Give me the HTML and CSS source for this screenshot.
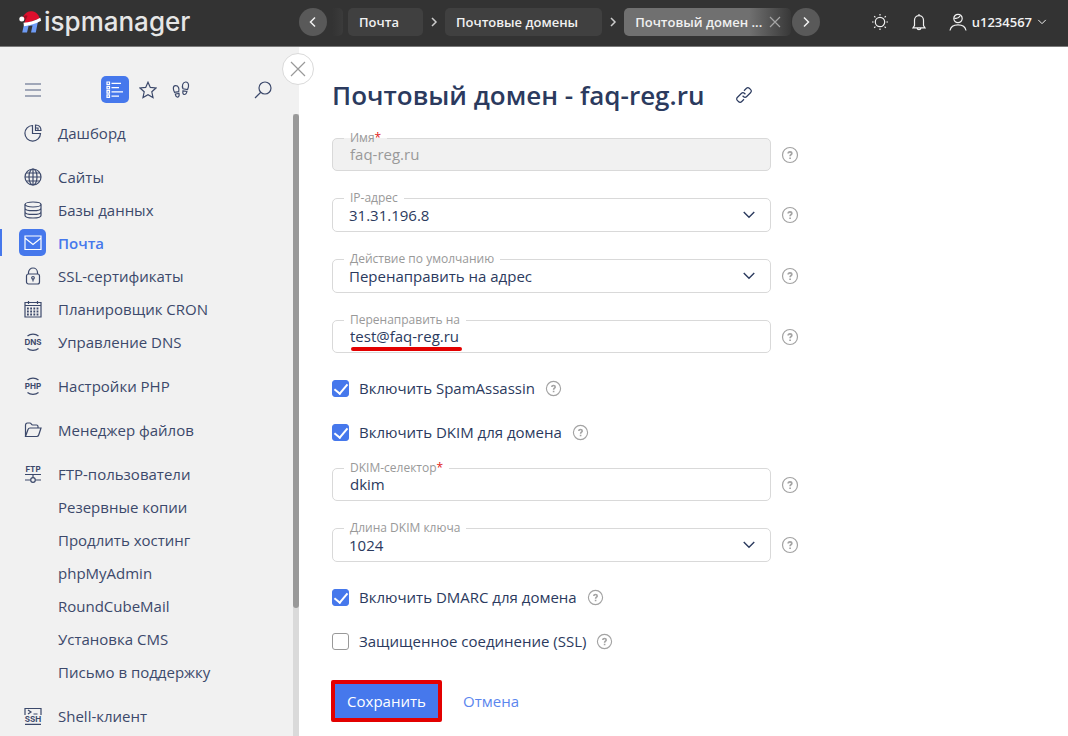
FILE: index.html
```html
<!DOCTYPE html>
<html lang="ru">
<head>
<meta charset="utf-8">
<title>Почтовый домен - faq-reg.ru</title>
<link rel="stylesheet" href="styles.css">
</head>
<body>
<svg class="defs" aria-hidden="true">
  <symbol id="chev-down" viewBox="0 0 12 12"><path d="M1.500 3.500 6 8l4.500-4.500"/></symbol>
  <symbol id="help" viewBox="0 0 18 18"><circle cx="9" cy="9" r="7.500"/><path class="q" d="M7.200 7.500c0-1.200.8-1.700 1.800-1.700s1.800.6 1.800 1.600c0 1.300-1.700 1.300-1.700 2.800M9.100 11.500v1.500"/></symbol>
</svg>

<header class="topbar">
  <a class="logo" href="#">
    <svg width="23" height="24" viewBox="0 0 23 24">
      <path fill="#6e9bf5" d="M5.200 13.500h5L8 22.500H3.200z"/>
      <path fill="#6e9bf5" d="M9.500 13l9.700-3-2.400 12.500H12l1.500-7-3.500.5z"/>
      <path fill="#de0f2d" d="M4 6.500C6.500 2.500 9.500.8 13 1.200c4 .5 7 3.500 7.800 7.300L5 14 7 8z"/>
      <path fill="#9d0d22" d="M3.800 7.500C5 5.600 6.800 5.200 8.600 5.800L6.800 10z"/>
      <path fill="#fff" d="M4.500 12.800Q13.500 12 21.300 7.700L22.200 10.800Q14 15.300 5 16.200z"/>
      <circle cx="2.800" cy="9" r="2.500" fill="#fff"/>
    </svg>
    <span>ispmanager</span>
  </a>
  <nav class="crumbs" aria-label="Навигация">
    <button class="round" aria-label="Назад"><svg width="12" height="12" viewBox="0 0 12 12"><path d="M8 1.500 3.500 6 8 10.500"/></svg></button>
    <span class="crumb-stub"></span>
    <a class="crumb" href="#">Почта</a>
    <svg class="sep" width="8" height="12" viewBox="0 0 8 12"><path d="M2 2l4 4-4 4"/></svg>
    <a class="crumb" href="#">Почтовые домены</a>
    <svg class="sep" width="8" height="12" viewBox="0 0 8 12"><path d="M2 2l4 4-4 4"/></svg>
    <a class="crumb current" href="#">Почтовый домен ... <svg width="12" height="12" viewBox="0 0 12 12"><path d="M1 1l10 10M11 1 1 11"/></svg></a>
    <button class="round" aria-label="Вперёд"><svg width="12" height="12" viewBox="0 0 12 12"><path d="M4 1.500l4.500 4.500L4 10.500"/></svg></button>
  </nav>
  <div class="tools">
    <button class="tool" aria-label="Тема"><svg width="18" height="18" viewBox="0 0 18 18"><circle cx="9" cy="9" r="4.700"/><path d="M9 1v1.600M9 15.400V17M1 9h1.600M15.400 9H17M3.200 3.200l1.200 1.200M13.600 13.600l1.200 1.200M3.200 14.800l1.200-1.200M13.600 4.400l1.200-1.200"/></svg></button>
    <button class="tool" aria-label="Уведомления"><svg width="18" height="18" viewBox="0 0 18 18"><path d="M9 1v1.500M4.500 12.500V7.200a4.500 4.500 0 0 1 9 0v5.300l1.500 2.300H3zM7 15c.3 2.200 3.700 2.200 4 0"/></svg></button>
    <button class="user"><svg width="18" height="18" viewBox="0 0 18 18"><circle cx="9" cy="5.500" r="4.200"/><path d="M5.300 5.200c2.700.6 4.700-.2 5.700-2.200M1 17.500c.6-3.700 3.500-5.700 8-5.700s7.400 2 8 5.700"/></svg><span>u1234567</span><svg width="10" height="10" viewBox="0 0 12 12"><use href="#chev-down"/></svg></button>
  </div>
</header>

<div class="layout">
  <aside class="sidebar">
    <div class="side-tools">
      <button class="icon-btn menu" aria-label="Меню"><svg width="18" height="18" viewBox="0 0 18 18"><path d="M1 3h16M1 9h16M1 15h16"/></svg></button>
      <button class="icon-btn active" aria-label="Список"><svg width="18" height="18" viewBox="0 0 18 18"><path d="M1 1h2.500v2.500H1zM1 5.300h2.500v2.500H1zM1 9.600h2.500v2.500H1zM1 13.900h2.500v2.500H1zM5.500 2.300H15M5.500 6.600H13M5.500 10.900H17M5.500 15.200H13"/></svg></button>
      <button class="icon-btn star" aria-label="Избранное"><svg width="18" height="18" viewBox="0 0 18 18"><path d="M9 1.200l2.300 5.200 5.700.6-4.200 3.800 1.200 5.700L9 13.700l-5 2.800 1.200-5.700L1 7l5.700-.6z"/></svg></button>
      <button class="icon-btn steps" aria-label="История"><svg width="18" height="18" viewBox="0 0 18 18"><path d="M2.500 11.300C1 8.500.6 4.800 3.500 4.700c3-.1 4 3 3.200 6zM3.300 13l3.700-.6c1 4.500-3 5-3.700.6zM11 7.800C9.500 4.500 11 .9 13.800 1c3.400.2 3.300 4.500 1.700 7.600zM11 9.800l3.900.7c-.7 4.500-5.100 3.700-3.900-.7z"/></svg></button>
      <button class="icon-btn search" aria-label="Поиск"><svg width="18" height="18" viewBox="0 0 18 18"><circle cx="11" cy="7" r="6"/><path d="M6.800 11.300 1 17"/></svg></button>
    </div>
    <nav class="menu-list" aria-label="Разделы">
      <a class="item last" href="#"><span class="ico"><svg width="18" height="18" viewBox="0 0 18 18"><path d="M8.500 1.500a7.800 7.800 0 1 0 8 8h-8zM11.500 1v5.500H17c0-3.500-2-5.500-5.500-5.500zM11.500 4h2.500v2.500"/></svg></span>Дашборд</a>
      <a class="item" href="#"><span class="ico"><svg width="18" height="18" viewBox="0 0 18 18"><circle cx="9" cy="9" r="8"/><ellipse cx="9" cy="9" rx="4" ry="8"/><path d="M9 1v16M1 9h16M2.200 5h13.600M2.200 13h13.600"/></svg></span>Сайты</a>
      <a class="item" href="#"><span class="ico"><svg width="18" height="18" viewBox="0 0 18 18"><ellipse cx="9" cy="3.500" rx="8" ry="2.500"/><path d="M1 3.500v11c0 3.300 16 3.300 16 0v-11M1 7.200c0 3.300 16 3.300 16 0M1 10.900c0 3.300 16 3.300 16 0"/></svg></span>Базы данных</a>
      <a class="item active" href="#"><span class="ico"><svg width="18" height="18" viewBox="0 0 18 18"><path d="M1 2h16v13.500H1zM1 4l8 6.500L17 4"/></svg></span>Почта</a>
      <a class="item" href="#"><span class="ico"><svg width="18" height="18" viewBox="0 0 18 18"><path d="M4.500 7V5.500a4.500 4.500 0 0 1 9 0V7"/><rect x="2.500" y="7" width="13" height="10" rx="2"/><circle cx="9" cy="10.800" r="1.300"/><path d="M9 12v2.500"/></svg></span>SSL-сертификаты</a>
      <a class="item" href="#"><span class="ico"><svg width="18" height="18" viewBox="0 0 18 18"><path d="M1 2.500h16V17H1zM1 5.500h16M4.500 1v3M13.500 1v3"/><path stroke-width="1.800" stroke-dasharray="1.800 1.400" d="M3 8.500h12.500M3 11.500h12.500M3 14.500h12.500"/></svg></span>Планировщик CRON</a>
      <a class="item last" href="#"><span class="ico"><svg width="18" height="18" viewBox="0 0 18 18"><path d="M3.500 3c3-2.500 8-2.500 11 0M3.500 15.500c3 2.500 8 2.500 11 0"/><text x="9" y="12" text-anchor="middle">DNS</text></svg></span>Управление DNS</a>
      <a class="item last" href="#"><span class="ico"><svg width="18" height="18" viewBox="0 0 18 18"><path d="M3.500 3c3-2.500 8-2.500 11 0M3.500 15.500c3 2.500 8 2.500 11 0"/><text x="9" y="12" text-anchor="middle">PHP</text></svg></span>Настройки PHP</a>
      <a class="item last" href="#"><span class="ico"><svg width="18" height="18" viewBox="0 0 18 18"><path d="M1.500 15.500V4.200Q1.500 2 3.500 2h2.300q1 0 1.500 1t1.500 1h3.700q1.500 0 1.500 1.500V7M1.500 15.500 4 8.500Q4.500 7 6 7h11l-2.300 7q-.5 1.500-2 1.500z"/></svg></span>Менеджер файлов</a>
      <a class="item" href="#"><span class="ico"><svg width="18" height="18" viewBox="0 0 18 18"><path d="M1 9.500h16M9 9.500v3M1 15h5.500M11.500 15H17"/><circle cx="9" cy="15" r="2.300"/><text x="9" y="6.500" text-anchor="middle">FTP</text></svg></span>FTP-пользователи</a>
      <a class="item" href="#"><span class="ico"></span>Резервные копии</a>
      <a class="item" href="#"><span class="ico"></span>Продлить хостинг</a>
      <a class="item" href="#"><span class="ico"></span>phpMyAdmin</a>
      <a class="item" href="#"><span class="ico"></span>RoundCubeMail</a>
      <a class="item" href="#"><span class="ico"></span>Установка CMS</a>
      <a class="item last" href="#"><span class="ico"></span>Письмо в поддержку</a>
      <a class="item" href="#"><span class="ico"><svg width="18" height="18" viewBox="0 0 18 18"><path d="M1 8V1.500h16V8M1 17.300h16M4 3l3 2-3 2M9.500 7h4"/><text x="9" y="15.200" text-anchor="middle">SSH</text></svg></span>Shell-клиент</a>
    </nav>
    <span class="scrollbar"><span class="thumb"></span></span>
    <button class="close" aria-label="Закрыть"><svg width="16" height="16" viewBox="0 0 16 16"><path d="M1 1l14 14M15 1 1 15"/></svg></button>
  </aside>

  <main class="content">
    <div class="heading">
      <h1>Почтовый домен - faq-reg.ru</h1>
      <button class="link-btn" aria-label="Ссылка"><svg width="18" height="18" viewBox="0 0 18 18"><g transform="rotate(-45 9 9)"><path d="M6 12H2.500A2 2 0 0 1 .5 10V8A2 2 0 0 1 2.500 6H8.500A2 2 0 0 1 10.500 8V9.500"/><path d="M12 6H15.500A2 2 0 0 1 17.500 8V10A2 2 0 0 1 15.500 12H9.500A2 2 0 0 1 7.500 10V8.500"/></g></svg></button>
    </div>
    <form class="form">
      <div class="row">
        <div class="field disabled"><label for="name">Имя<b>*</b></label><input id="name" type="text" value="faq-reg.ru" disabled></div>
        <button type="button" class="help" aria-label="Справка"><svg width="18" height="18"><use href="#help"/></svg></button>
      </div>
      <div class="row">
        <div class="field pick"><label for="ip">IP-адрес</label><select id="ip"><option>31.31.196.8</option></select><svg class="arrow" width="14" height="14"><use href="#chev-down"/></svg></div>
        <button type="button" class="help" aria-label="Справка"><svg width="18" height="18"><use href="#help"/></svg></button>
      </div>
      <div class="row">
        <div class="field pick"><label for="action">Действие по умолчанию</label><select id="action"><option>Перенаправить на адрес</option></select><svg class="arrow" width="14" height="14"><use href="#chev-down"/></svg></div>
        <button type="button" class="help" aria-label="Справка"><svg width="18" height="18"><use href="#help"/></svg></button>
      </div>
      <div class="row">
        <div class="field"><label for="redirect">Перенаправить на</label><input id="redirect" type="text" value="test@faq-reg.ru"><span class="mark"></span></div>
        <button type="button" class="help" aria-label="Справка"><svg width="18" height="18"><use href="#help"/></svg></button>
      </div>
      <div class="check">
        <label><input type="checkbox" checked>Включить SpamAssassin</label>
        <button type="button" class="help" aria-label="Справка"><svg width="17" height="17"><use href="#help"/></svg></button>
      </div>
      <div class="check">
        <label><input type="checkbox" checked>Включить DKIM для домена</label>
        <button type="button" class="help" aria-label="Справка"><svg width="17" height="17"><use href="#help"/></svg></button>
      </div>
      <div class="row">
        <div class="field"><label for="selector">DKIM-селектор<b>*</b></label><input id="selector" type="text" value="dkim"></div>
        <button type="button" class="help" aria-label="Справка"><svg width="18" height="18"><use href="#help"/></svg></button>
      </div>
      <div class="row">
        <div class="field pick"><label for="length">Длина DKIM ключа</label><select id="length"><option>1024</option></select><svg class="arrow" width="14" height="14"><use href="#chev-down"/></svg></div>
        <button type="button" class="help" aria-label="Справка"><svg width="18" height="18"><use href="#help"/></svg></button>
      </div>
      <div class="check">
        <label><input type="checkbox" checked>Включить DMARC для домена</label>
        <button type="button" class="help" aria-label="Справка"><svg width="17" height="17"><use href="#help"/></svg></button>
      </div>
      <div class="check">
        <label><input type="checkbox">Защищенное соединение (SSL)</label>
        <button type="button" class="help" aria-label="Справка"><svg width="17" height="17"><use href="#help"/></svg></button>
      </div>
      <div class="actions">
        <button type="submit" class="save">Сохранить</button>
        <button type="button" class="cancel">Отмена</button>
      </div>
    </form>
  </main>
</div>
</body>
</html>
```
FILE: styles.css
```css
* { box-sizing: border-box; }

body {
  margin: 0;
  height: 100vh;
  display: flex;
  flex-direction: column;
  overflow: hidden;
  background: #fff;
  color: #2b3a5e;
  font-family: "Open Sans", "Noto Sans", sans-serif;
  font-size: 15px;
}

button {
  padding: 0;
  border: 0;
  background: none;
  color: inherit;
  font: inherit;
  display: flex;
  align-items: center;
  justify-content: center;
}

a { color: inherit; text-decoration: none; }
svg { display: block; flex: none; fill: none; stroke: currentColor; stroke-width: 1.2; }
.defs { position: absolute; width: 0; height: 0; }

/* Top bar */
.topbar {
  display: flex;
  align-items: center;
  flex: none;
  height: 47px;
  padding: 0 21px 2px 19px;
  background: #333;
  border-bottom: 1px solid #7a7a7a;
  color: #f1f1f1;
}

.logo {
  display: flex;
  align-items: center;
  gap: 2px;
  width: 280px;
  color: #e6e6e6;
  font-family: Inter, sans-serif;
  font-size: 26px;
  font-weight: 500;
  line-height: 30px;
}
.logo svg { stroke: none; }

.crumbs { display: flex; align-items: center; }
.round {
  width: 28px;
  height: 28px;
  border-radius: 50%;
  background: #595959;
}
.round svg { stroke-width: 1.5; }
.crumb-stub {
  width: 11px;
  height: 28px;
  margin: 0 5px;
  border-radius: 0 5px 5px 0;
  background: linear-gradient(90deg, #333, #3b3b3b);
}
.crumb {
  display: flex;
  align-items: center;
  height: 28px;
  padding: 0 24px 0 11px;
  border-radius: 5px;
  background: #404040;
  font-size: 13px;
  font-weight: 600;
  white-space: nowrap;
}
.sep { margin: 0 7px; stroke: #ccc; stroke-width: 1.5; }
.crumb.current {
  gap: 7px;
  padding-right: 10px;
  margin-right: 1px;
  background: linear-gradient(90deg, #707070 75%, #383838);
}
.crumb.current svg { stroke: #a6a6a6; }

.tools { display: flex; align-items: center; gap: 21px; margin-left: auto; }
.user { gap: 5px; font-size: 13px; font-weight: 600; }

/* Sidebar */
.layout { display: flex; flex: 1; min-height: 0; }
.sidebar {
  position: relative;
  flex: none;
  width: 299px;
  padding-top: 29px;
  background: #f1f1f1;
  color: #3c496b;
}
.side-tools { display: flex; align-items: center; padding: 0 22px 0 19px; }
.icon-btn { width: 28px; height: 27px; border-radius: 5px; }
.icon-btn.menu { margin-right: 54px; color: #858ea5; }
.icon-btn.menu svg { stroke-width: 1.7; }
.icon-btn.star { margin: 0 5px; }
.icon-btn.search { margin-left: auto; }
.icon-btn.active { background: #4678ec; color: #fff; }

.menu-list { padding-top: 13px; }
.item {
  display: flex;
  align-items: center;
  gap: 12px;
  height: 33px;
  padding-left: 19px;
}
.item.last { margin-bottom: 11px; }
.item.active {
  color: #4678ec;
  font-weight: 600;
  background: linear-gradient(#4678ec, #4678ec) 0 50% / 2px 27px no-repeat;
}
.ico {
  display: flex;
  align-items: center;
  justify-content: center;
  width: 27px;
  height: 27px;
  border-radius: 5px;
}
.item.active .ico { background: #4678ec; color: #fff; }
.ico text {
  fill: currentColor;
  stroke: none;
  font-family: Inter, sans-serif;
  font-size: 8px;
  font-weight: 700;
}

.scrollbar {
  position: absolute;
  top: 67px;
  right: 0;
  bottom: 0;
  width: 6px;
  background: #dadada;
}
.thumb {
  display: block;
  height: 79.5%;
  border-radius: 3px;
  background: #999;
}
.close {
  position: absolute;
  top: 6px;
  right: -15px;
  width: 32px;
  height: 32px;
  border: 1px solid #dadada;
  border-radius: 50%;
  background: #fff;
  color: #999;
}

/* Form */
.content { flex: 1; padding: 28px 33px 0; }
.heading { display: flex; align-items: center; gap: 31px; }
h1 { margin: 0; font-size: 26px; line-height: 40px; font-weight: 600; }

.form {
  display: flex;
  flex-direction: column;
  gap: 27px;
  margin-top: 23px;
}
.row { display: flex; align-items: center; gap: 10px; }
.field { position: relative; flex: 0 1 439px; height: 33px; }
.field.pick { height: 34px; }
.field input,
.field select {
  display: block;
  width: 100%;
  height: 100%;
  padding: 0 17px 1px;
  border: 1px solid #d9d9d9;
  border-radius: 5px;
  background: #fff;
  color: inherit;
  font: inherit;
  appearance: none;
}
.field select { padding: 0 16px; }
.field label {
  position: absolute;
  top: -8px;
  left: 12px;
  padding: 0 6px;
  background: #fff;
  color: #999;
  font-size: 12px;
  line-height: 16px;
}
.field label b { color: #e02020; font-weight: 400; }
.field.disabled input { background: #f1f1f1; color: #999; }
.field.disabled label { background: linear-gradient(#fff 50%, #f1f1f1 50%); }
.arrow { position: absolute; top: 10px; right: 15px; pointer-events: none; }
.mark {
  position: absolute;
  left: 19px;
  bottom: 2px;
  width: 111px;
  height: 4px;
  border-radius: 2px;
  background: #e30000;
}

.help { color: #a3a3a3; }
.q { stroke-width: 1.7; }

.check { display: flex; align-items: center; gap: 10px; height: 17px; }
.check label { display: flex; align-items: center; gap: 10px; line-height: 17px; }
.check input {
  display: flex;
  justify-content: center;
  width: 17px;
  height: 17px;
  margin: 0;
  border: 1px solid #999;
  border-radius: 3px;
  background: #fff;
  appearance: none;
}
.check input:checked { border-color: #4678ec; background: #4678ec; }
.check input:checked::after {
  content: "";
  width: 6px;
  height: 11px;
  border: solid #fff;
  border-width: 0 2px 2px 0;
  transform: rotate(40deg);
}

.actions { display: flex; gap: 21px; margin: 3px 0 0 -1px; }
.save {
  width: 111px;
  height: 42px;
  border: 4px solid #e30000;
  border-radius: 2px;
  background: #4678ec;
  color: #fff;
}
.cancel { color: #5b86ee; }
```
